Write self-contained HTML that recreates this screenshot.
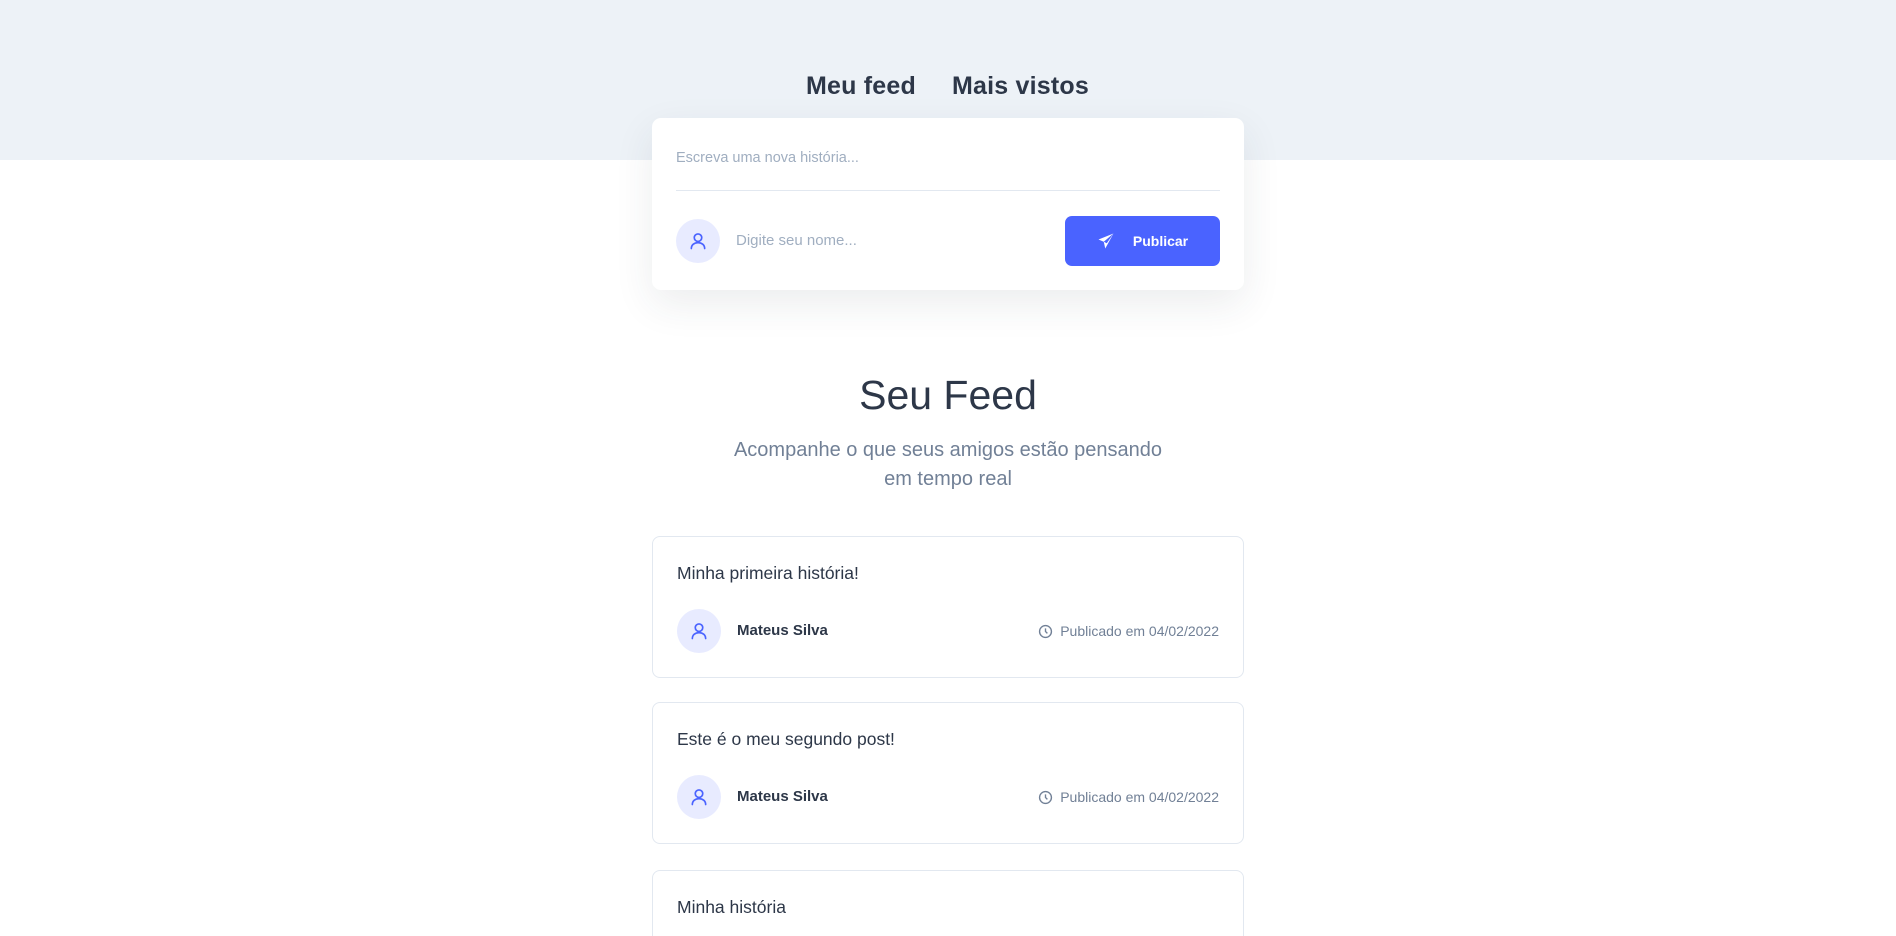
<!DOCTYPE html>
<html style="width:1896px;height:936px;overflow:hidden"><head><meta charset="utf-8"><style>
*{margin:0;padding:0;box-sizing:border-box}
body{width:1896px;height:936px;overflow:hidden;background:#fff;font-family:"Liberation Sans",sans-serif;position:relative}
.hdr{position:absolute;left:0;top:0;width:1896px;height:160px;background:#edf2f7}
.tab{position:absolute;top:72px;font-size:25px;font-weight:bold;color:#2d3748;letter-spacing:0.2px}
.card{position:absolute;left:652px;top:118px;width:592px;height:172px;background:#fff;border-radius:9px;box-shadow:0 14px 40px rgba(45,55,72,0.09)}
.ph{position:absolute;color:#a0aec0;font-size:14.5px}
.line{position:absolute;left:24px;top:72px;width:544px;height:1px;background:#e2e8f0}
.av{position:absolute;width:44px;height:44px;border-radius:50%;background:#e8ebff;display:flex;align-items:center;justify-content:center}
.btn{position:absolute;left:413px;top:98px;width:155px;height:50px;background:#4a63ff;border-radius:7px;color:#fff;font-weight:bold;font-size:14px;display:flex;align-items:center;justify-content:center;gap:18px}
h1{position:absolute;top:372px;width:1896px;text-align:center;font-weight:normal;font-size:41px;color:#2d3748}
.sub{position:absolute;top:436px;width:1896px;text-align:center;font-size:20px;line-height:29px;color:#718096}
.post{position:absolute;left:652px;width:592px;height:142px;border:1px solid #e2e8f0;border-radius:8px;background:#fff}
.pt{position:absolute;left:24px;top:26px;font-size:17.5px;color:#2d3748}
.name{position:absolute;left:84px;top:85px;font-size:15px;font-weight:bold;color:#2d3748}
.date{position:absolute;right:24px;top:86px;font-size:14px;color:#718096;display:flex;align-items:center;gap:7px}
</style></head><body>
<div class="hdr"></div>
<div class="tab" style="left:806px">Meu feed</div>
<div class="tab" style="left:952px">Mais vistos</div>
<div class="card">
<div class="ph" style="left:24px;top:32px">Escreva uma nova história...</div>
<div class="line"></div>
<div class="av" style="left:24px;top:101px"><svg width="20" height="20" viewBox="0 0 24 24" fill="none" stroke="#4a63ff" stroke-width="2" stroke-linecap="round"><circle cx="12" cy="8" r="4.5"/><path d="M4 21c0-4.5 3.6-7 8-7s8 2.5 8 7"/></svg></div>
<div class="ph" style="left:84px;top:114px;font-size:15px">Digite seu nome...</div>
<div class="btn"><svg width="18" height="18" viewBox="0 0 24 24" fill="#fff"><path d="M22 2L2 10l7 3 2 9 11-20zM9 13l13-11-9 13z"/></svg>Publicar</div>
</div>
<h1>Seu Feed</h1>
<div class="sub">Acompanhe o que seus amigos estão pensando<br>em tempo real</div>

<div class="post" style="top:536px"><div class="pt">Minha primeira história!</div>
<div class="av" style="left:24px;top:72px"><svg width="20" height="20" viewBox="0 0 24 24" fill="none" stroke="#4a63ff" stroke-width="2" stroke-linecap="round"><circle cx="12" cy="8" r="4.5"/><path d="M4 21c0-4.5 3.6-7 8-7s8 2.5 8 7"/></svg></div>
<div class="name">Mateus Silva</div>
<div class="date"><svg width="15" height="15" viewBox="0 0 24 24" fill="none" stroke="#718096" stroke-width="2.2"><circle cx="12" cy="12" r="9.5"/><path d="M12 7v5l3 3"/></svg>Publicado em 04/02/2022</div></div>

<div class="post" style="top:702px"><div class="pt">Este é o meu segundo post!</div>
<div class="av" style="left:24px;top:72px"><svg width="20" height="20" viewBox="0 0 24 24" fill="none" stroke="#4a63ff" stroke-width="2" stroke-linecap="round"><circle cx="12" cy="8" r="4.5"/><path d="M4 21c0-4.5 3.6-7 8-7s8 2.5 8 7"/></svg></div>
<div class="name">Mateus Silva</div>
<div class="date"><svg width="15" height="15" viewBox="0 0 24 24" fill="none" stroke="#718096" stroke-width="2.2"><circle cx="12" cy="12" r="9.5"/><path d="M12 7v5l3 3"/></svg>Publicado em 04/02/2022</div></div>

<div class="post" style="top:870px;height:66px;border-bottom:none;border-radius:8px 8px 0 0"><div class="pt">Minha história</div></div>
</body></html>
